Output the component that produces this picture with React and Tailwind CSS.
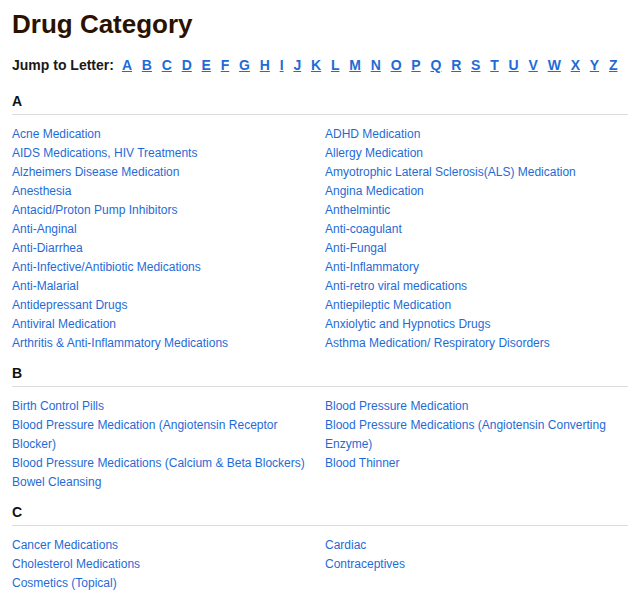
const letters = "ABCDEFGHIJKLMNOPQRSTUVWXYZ".split("");

// each row is [left, right]
const sections = [
  {
    letter: "A",
    rows: [
      ["Acne Medication", "ADHD Medication"],
      ["AIDS Medications, HIV Treatments", "Allergy Medication"],
      ["Alzheimers Disease Medication", "Amyotrophic Lateral Sclerosis(ALS) Medication"],
      ["Anesthesia", "Angina Medication"],
      ["Antacid/Proton Pump Inhibitors", "Anthelmintic"],
      ["Anti-Anginal", "Anti-coagulant"],
      ["Anti-Diarrhea", "Anti-Fungal"],
      ["Anti-Infective/Antibiotic Medications", "Anti-Inflammatory"],
      ["Anti-Malarial", "Anti-retro viral medications"],
      ["Antidepressant Drugs", "Antiepileptic Medication"],
      ["Antiviral Medication", "Anxiolytic and Hypnotics Drugs"],
      ["Arthritis & Anti-Inflammatory Medications", "Asthma Medication/ Respiratory Disorders"],
    ],
  },
  {
    letter: "B",
    rows: [
      ["Birth Control Pills", "Blood Pressure Medication"],
      [
        "Blood Pressure Medication (Angiotensin Receptor Blocker)",
        "Blood Pressure Medications (Angiotensin Converting Enzyme)",
      ],
      ["Blood Pressure Medications (Calcium & Beta Blockers)", "Blood Thinner"],
      ["Bowel Cleansing", null],
    ],
  },
  {
    letter: "C",
    rows: [
      ["Cancer Medications", "Cardiac"],
      ["Cholesterol Medications", "Contraceptives"],
      ["Cosmetics (Topical)", null],
    ],
  },
];

const Section = ({ letter, rows }) => (
  <div className="mb-[10px]" id={letter}>
    <h2 className="text-[14px] leading-[20px] font-bold text-[#111] pb-[3px] border-b border-[#dddddd]">
      {letter}
    </h2>
    <div className="grid grid-cols-[313px_1fr] mt-[10px] text-[12px] leading-[19px]">
      {rows.map(([left, right], i) => (
        <div key={i} className="contents">
          <div className="pr-[6px]">
            {left && (
              <a href="#" className="text-[#1f6bd6] no-underline">
                {left}
              </a>
            )}
          </div>
          <div className="pr-[6px]">
            {right && (
              <a href="#" className="text-[#1f6bd6] no-underline">
                {right}
              </a>
            )}
          </div>
        </div>
      ))}
    </div>
  </div>
);

export default function App() {
  return (
    <div
      className="min-h-screen bg-white pl-[12px] pt-[9px] overflow-hidden"
      style={{ fontFamily: '"Liberation Sans", Arial, sans-serif' }}
    >
      <h1 className="text-[26px] leading-[30px] font-bold text-[#2b1200]">Drug Category</h1>

      <div className="mt-[16px] text-[14px] leading-[20px] font-bold text-[#1a1a1a] flex items-baseline">
        <span className="mr-[8px]">Jump to Letter:</span>
        <div className="flex gap-[9.8px]">
          {letters.map((l) => (
            <a key={l} href={`#${l}`} className="text-[#1f6bd6] underline">
              {l}
            </a>
          ))}
        </div>
      </div>

      <div className="mt-[16px]">
        {sections.map((s) => (
          <Section key={s.letter} letter={s.letter} rows={s.rows} />
        ))}
      </div>
    </div>
  );
}
